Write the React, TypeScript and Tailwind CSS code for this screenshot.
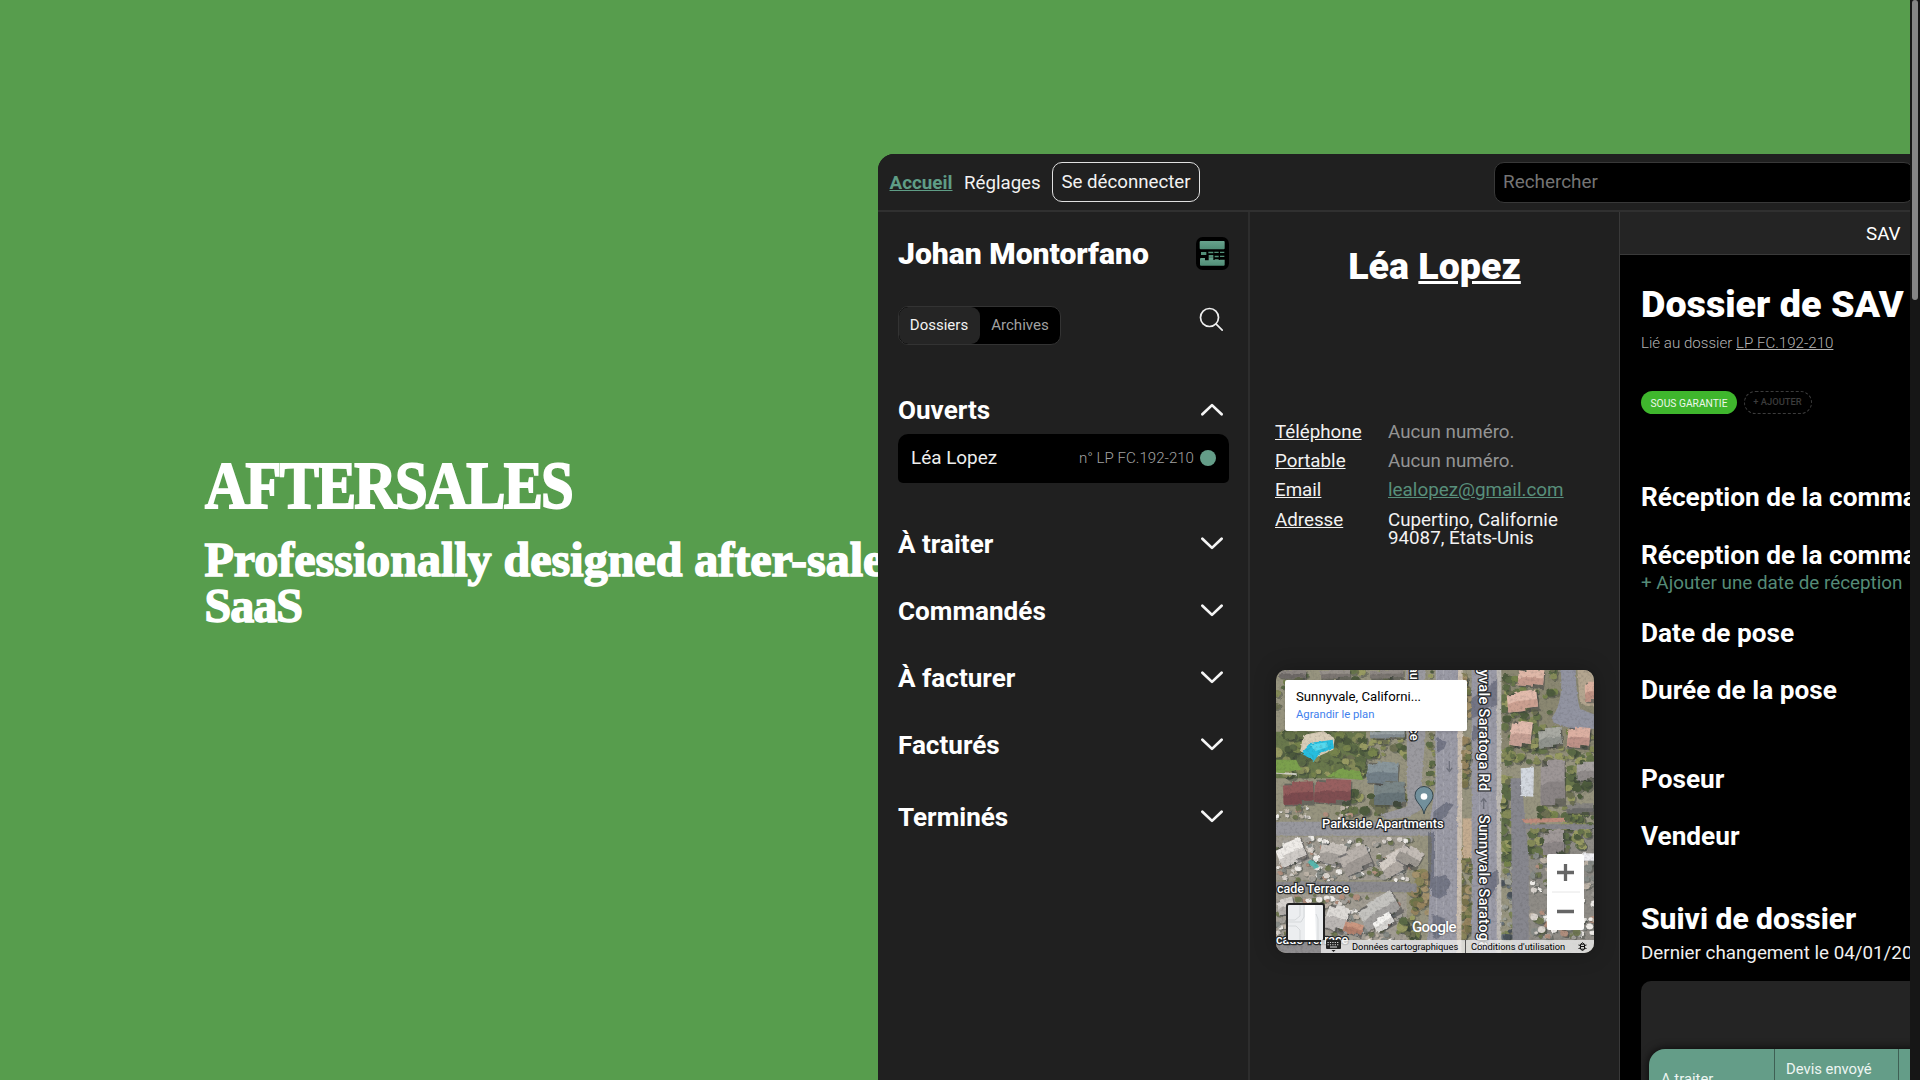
import type { ReactNode } from "react";

function Chevron({ up = false }: { up?: boolean }) {
  return (
    <svg width="22" height="14" viewBox="0 0 22 14" fill="none" stroke="#f5f5f5" strokeWidth="2.7" strokeLinecap="round" strokeLinejoin="round" className={up ? "-translate-y-px rotate-180" : ""}>
      <path d="M1.4 1.7 11 10.900l9.600-9.200" />
    </svg>
  );
}

function Section({ title, up }: { title: string; up?: boolean }) {
  return (
    <div className="flex h-10 items-center justify-between pr-1.5 text-[26.1px] font-bold leading-10 text-white">
      <span>{title}</span>
      <Chevron up={up} />
    </div>
  );
}

function Logo() {
  return (
    <svg width="33" height="33" viewBox="0 0 99 99">
      <defs>
        <linearGradient id="lg" x1="0" y1="0" x2="0" y2="1">
          <stop offset="0" stopColor="#68a38d" />
          <stop offset="1" stopColor="#508d76" />
        </linearGradient>
      </defs>
      <rect width="99" height="99" rx="20" fill="#000" />
      <rect x="11" y="12" width="75" height="25" rx="3" fill="url(#lg)" />
      <path d="M15 45h16v9H15z M37 44h15v5H37z M55 44h13v4H55z M72 44h13v4H72z M38 54h14v7H38z M56 56h12v5H56z M72 56h13v4H72z" fill="#528f78" />
      <path d="M12 66q0-3 3-3h12v7h11v-9h14v8h4v-2h12v2h4v-1h14v15q0 3-3 3H15q-3 0-3-3z" fill="url(#lg)" />
    </svg>
  );
}

function rng(seed: number) {
  let s = seed;
  return () => {
    s = (s * 16807) % 2147483647;
    return s / 2147483647;
  };
}

const GREENS = ["#66744a", "#76834c", "#4d5b3d", "#848a58", "#5b6a46", "#979a62", "#6d7053"];
const BROWNS = ["#95835e", "#78724c", "#a4926d", "#6e7549", "#8a855a"];
const CLUTTER = ["#d9d3cd", "#a3a09a", "#bdb3a7", "#868a86", "#6f7752", "#efece8", "#b08e7d"];

type Patch = [number, number, number, number, number, number, string[]];
const PATCHES: Patch[] = [
  [18, 15, 390, 200, 60, 12, GREENS],
  [18, 200, 270, 130, 80, 15, GREENS],
  [280, 195, 130, 90, 30, 13, GREENS],
  [220, 375, 190, 75, 28, 14, GREENS],
  [18, 425, 230, 35, 26, 8, CLUTTER],
  [475, 15, 22, 340, 30, 9, GREENS],
  [572, 15, 26, 345, 50, 13, BROWNS],
  [570, 560, 40, 270, 50, 13, BROWNS],
  [692, 250, 34, 350, 55, 14, GREENS],
  [700, 15, 160, 190, 54, 12, GREENS],
  [715, 190, 255, 100, 70, 12, GREENS],
  [885, 280, 85, 270, 70, 14, GREENS],
  [780, 420, 110, 150, 30, 14, GREENS],
  [785, 570, 190, 250, 110, 11, CLUTTER],
  [695, 610, 34, 220, 30, 10, ["#4a525a", "#667077", "#7d8658", "#9c9e95"]],
  [20, 520, 400, 125, 150, 9, CLUTTER],
  [20, 690, 370, 140, 130, 9, CLUTTER],
  [425, 600, 50, 150, 30, 14, BROWNS],
  [385, 755, 60, 70, 20, 14, GREENS],
];

function Trees() {
  const out: ReactNode[] = [];
  PATCHES.forEach(([x, y, w, h, n, r, colors], p) => {
    const rand = rng(991 + p * 77);
    for (let i = 0; i < n; i++) {
      const cx = x + rand() * w;
      const cy = y + rand() * h;
      const rr = r * (0.5 + rand() * 0.7);
      const fill = colors[Math.floor(rand() * colors.length)];
      out.push(<ellipse key={`s${p}-${i}`} cx={cx + rr * 0.4} cy={cy + rr * 0.35} rx={rr} ry={rr * 0.9} fill="#353c38" opacity="0.4" />);
      out.push(<ellipse key={`t${p}-${i}`} cx={cx} cy={cy} rx={rr} ry={rr * 0.85} fill={fill} />);
    }
  });
  return <g>{out}</g>;
}

type House = [number, number, number, number, number, string, string];
const HOUSES: House[] = [
  [40, 350, 90, 68, -2, "#935b5b", "#7c4a4e"],
  [134, 342, 108, 72, 3, "#986060", "#7f4e51"],
  [292, 290, 92, 66, 4, "#89969b", "#727f87"],
  [312, 350, 92, 70, 0, "#7a8687", "#677478"],
  [300, 196, 104, 24, 0, "#9ca5a7", "#828b90"],
  [28, 14, 80, 26, 3, "#8b8581", "#6e6967"],
  [150, 14, 90, 26, 0, "#96908a", "#7b7571"],
  [300, 14, 100, 26, 0, "#8f8984", "#7a7570"],
  [745, 12, 76, 52, 5, "#dfb8a8", "#c59a8c"],
  [712, 78, 90, 60, -6, "#e2bbac", "#cba091"],
  [722, 168, 62, 76, 8, "#e1bbad", "#c6a094"],
  [806, 188, 68, 60, -4, "#a9aaa3", "#90938d"],
  [893, 186, 66, 62, 5, "#dcb0a2", "#be9288"],
  [945, 50, 30, 60, 0, "#dbb09f", "#be9284"],
  [812, 284, 72, 136, 0, "#9d9696", "#8a8484"],
  [920, 290, 55, 56, 0, "#a7a2a1", "#8f8a89"],
  [820, 494, 62, 76, 0, "#a09998", "#8b8585"],
  [890, 415, 80, 30, 0, "#858380", "#6b6b6a"],
  [22, 530, 82, 66, -22, "#efece8", "#cfcbc7"],
  [150, 535, 76, 62, 12, "#c6c0ba", "#a5a09b"],
  [212, 550, 88, 70, -24, "#b9b2ac", "#9f9994"],
  [330, 560, 96, 62, -28, "#d4cdc6", "#b0a9a3"],
  [385, 545, 70, 56, 30, "#c3bcb6", "#9d9892"],
  [268, 700, 118, 74, -30, "#c5c4c0", "#a2a09e"],
  [168, 720, 64, 76, 20, "#dedbd7", "#bbb7b4"],
  [310, 752, 60, 40, -30, "#f4f3f0", "#d8d6d3"],
  [222, 772, 56, 34, 18, "#cb9780", "#b07e6b"],
  [22, 700, 50, 46, -15, "#d6d2ce", "#b2aeaa"],
];

function Houses() {
  return (
    <g>
      {HOUSES.map(([x, y, w, h, a, c, d], i) => (
        <g key={i} transform={`rotate(${a} ${x + w / 2} ${y + h / 2})`}>
          <rect x={x + 4} y={y + 5} width={w} height={h} fill="#30343a" opacity="0.45" />
          <path d={`M${x} ${y + h * 0.15}h${w * 0.3}v${-h * 0.15}h${w * 0.7}v${h * 0.85}h${-w * 0.4}v${h * 0.15}h${-w * 0.6}z`} fill={c} />
          <path d={`M${x} ${y + h * 0.6}l${w * 0.3} ${-h * 0.12}h${w * 0.7}v${h * 0.37}h${-w * 0.4}v${h * 0.15}h${-w * 0.6}z`} fill={d} />
        </g>
      ))}
    </g>
  );
}

function SatelliteMap() {
  return (
    <svg width="318" height="283" viewBox="18 15 954 849" preserveAspectRatio="none">
      <defs>
        <filter id="grain" x="0" y="0" width="100%" height="100%">
          <feTurbulence type="fractalNoise" baseFrequency="0.12" numOctaves="3" seed="8" />
          <feColorMatrix values="0 0 0 0 0.05  0 0 0 0 0.05  0 0 0 0 0.05  2.4 0 0 0 -1.1" />
        </filter>
        <filter id="rough" x="-5%" y="-5%" width="110%" height="110%" colorInterpolationFilters="sRGB">
          <feTurbulence type="fractalNoise" baseFrequency="0.07" numOctaves="2" seed="3" result="n" />
          <feDisplacementMap in="SourceGraphic" in2="n" scale="8" xChannelSelector="R" yChannelSelector="G" />
        </filter>
      </defs>
      <rect x="18" y="15" width="954" height="849" fill="#97947f" />
      <g filter="url(#rough)">
        <path d="M18 200h270v140H18z" fill="#69784c" />
        <path d="M690 10h290v255H690z" fill="#8a8771" />
        <path d="M740 480h240v390H740z" fill="#8f8c86" />
        <path d="M10 515h400v130H10zM10 685h400v140H10z" fill="#a19c92" />
        <Trees />
        <path d="M18 284h60l16 30-80 10zM170 335l40-24 60 8 10 26z" fill="#7ba04d" />
        <path d="M10 322l70 6" stroke="#d0d0c4" strokeWidth="6" />
        <path d="M100 210l60-12 34 22-4 34-50 22-50-16z" fill="#d9ceb9" />
        <path d="M92 264l28-30 68-10 4 26-42 14-18 24z" fill="#27bedf" />
        <path d="M120 240l50-8 4 14-38 12z" fill="#55d9ee" />
        <path d="M112 590l22-4 14 20-16 6z" fill="#58b6ad" />
        <path d="M408 10h58v205l-10 120v100l-46 22-60 6-20-14 82-24z" fill="#9b9a9f" />
        <path d="M10 470h340l130 6v36H10z" fill="#98989e" />
        <path d="M10 650h390l40 8v24H10z" fill="#8b8a8e" />
        <path d="M10 826h450v44H10z" fill="#8f8d8f" />
        <path d="M497 5h70v868h-97l16-338-8-60 18-110z" fill="#9a9aa5" />
        <path d="M564 10h14l-4 860h-14z" fill="#cbbfb1" />
        <path d="M578 460h30v120h-30z" fill="#c4ac90" />
        <path d="M605 5h78v868h-78z" fill="#9999a5" />
        <path d="M680 5h14v868h-14z" fill="#bdb9b4" />
        <path d="M722 340h32l22 240v290h-48z" fill="#87878e" />
        <path d="M845 160q38-50 26-150h46q2 95 14 123l50 18v40l-70 2-60-20z" fill="#9294a1" />
        <path d="M922 10h54v110q-40 12-48-20z" fill="#b3a58f" />
        <path d="M755 462l130-4v12l-120 4z" fill="#bf8c7c" />
        <path d="M750 478h230v14H760z" fill="#86858a" />
        <path d="M752 310l40-3-2 88-36-2z" fill="#d3d8df" />
        <path d="M940 565h40v22h-40z" fill="#eeeef2" />
        <Houses />
      </g>
      <g stroke="#c6c6ce" strokeWidth="1.5" opacity="0.7">
        <path d="M520 15v850M543 15v850" strokeDasharray="14 10" />
        <path d="M499 15v850M628 15v850M660 15v850" />
      </g>
      <g fill="#363c52" opacity="0.38" filter="url(#rough)">
        <path d="M605 100l30-20 25-18 22-22v80l-28 6-20 24-29 10z" />
        <path d="M486 640l40-10 16 25-14 34-20 12-22-8zM488 750l36 10 8 30-30 34-14-8zM500 215l30 16-8 20-22 12zM490 440l40-30 20 10-24 36-36 24z" />
        <path d="M640 640l44-26 4 40-40 60zM610 180l24 12-14 30-12 8zM474 500h18v170h-18z" />
      </g>
      <path d="M538 288v30m-8-9 8 10 8-10M641 432v-30m-8 9 8-10 8 10" fill="none" stroke="#6f717c" strokeWidth="4" />
      <rect x="18" y="15" width="954" height="849" filter="url(#grain)" opacity="0.18" />
    </svg>
  );
}

function MapLabel({ children, className }: { children: ReactNode; className: string }) {
  return (
    <span className={`absolute whitespace-nowrap font-medium text-white [paint-order:stroke_fill] [-webkit-text-stroke:2.5px_#26282a] ${className}`}>{children}</span>
  );
}

function MapCard() {
  return (
    <div className="relative ml-[26px] mt-[122px] h-[283px] w-[318px] overflow-hidden rounded-[10px] shadow-[0_0_22px_rgba(0,0,0,0.28)]">
      <SatelliteMap />
      <MapLabel className="bottom-[212px] left-[130px] text-[12.800px] leading-4 [writing-mode:vertical-rl]">Laurel Terrace</MapLabel>
      <MapLabel className="bottom-[161px] left-[199px] text-[14.500px] leading-4 tracking-[0.350px] [writing-mode:vertical-rl]">Sunnyvale Saratoga Rd</MapLabel>
      <MapLabel className="left-[199px] top-[145px] text-[14.500px] leading-4 tracking-[0.350px] [writing-mode:vertical-rl]">Sunnyvale Saratoga Rd</MapLabel>
      <MapLabel className="left-[46px] top-[146px] text-[12.9px] leading-4">Parkside Apartments</MapLabel>
      <MapLabel className="left-px top-[211px] text-[12.5px] leading-4">cade Terrace</MapLabel>
      <MapLabel className="left-0 top-[262px] text-[12.5px] leading-4">cade Terrace</MapLabel>
      <svg className="absolute left-[138px] top-[116px]" width="20" height="29" viewBox="0 0 20 29">
        <path d="M10 28C9 20 1 16 1 9.500a9 9 0 0 1 18 0C19 16 11 20 10 28z" fill="#72909c" stroke="#34464f" strokeWidth="1" />
        <circle cx="10" cy="10.500" r="3.300" fill="#fff" />
      </svg>
      <div className="absolute left-[9px] top-[10px] flex h-[51px] w-[182px] flex-col rounded-[2px] bg-white pl-[11px] pt-[8px] shadow">
        <span className="text-[13.200px] font-[450] leading-[18px] text-black">Sunnyvale, Californi...</span>
        <span className="text-[11.3px] leading-[17px] text-[#427fed]">Agrandir le plan</span>
      </div>
      <div className="absolute left-[9.500px] top-[233px] h-[39px] w-[39px] rounded-[3px] border-2 border-[#222] bg-[#eceef0]">
        <svg width="35" height="35" viewBox="0 0 35 35" fill="none">
          <path d="M17 0h10l1 35H17z" fill="#fff" />
          <path d="M12 0v11l-5 4H0M12 35V25l-4-4H0M16 0v12l-3 5H0M28 9l2 5v21" stroke="#d5d8da" />
        </svg>
      </div>
      <span className="absolute left-[136px] top-[247px] text-[15px] font-medium leading-5 -tracking-[0.600px] text-white [text-shadow:0_0_2px_#333]">Google</span>
      <div className="absolute left-[271px] top-[184px] h-[76px] w-[37px] rounded-[2px] bg-white">
        <svg width="37" height="76" viewBox="0 0 37 76" stroke="#666" strokeWidth="3.300">
          <path d="M10 18.500h17M18.500 10v17M10 57.500h17" />
          <path d="M5 38h28" stroke="#e6e6e6" strokeWidth="1" />
        </svg>
      </div>
      <div className="absolute bottom-0 right-0 flex h-[13px] w-[273px] items-center bg-[#f2f2f2]/75 text-[9.3px] leading-[13px] text-black">
        <svg className="ml-[5px]" width="15" height="12" viewBox="0 0 15 12">
          <rect y="0" width="15" height="9" rx="1" fill="#222" />
          <path d="M1.500 2.500h12M1.500 4.700h12" stroke="#ddd" strokeWidth="1.100" strokeDasharray="1.200 1.200" />
          <path d="M4 7h7" stroke="#ddd" />
          <path d="M5.500 10h4l-2 2z" fill="#222" />
        </svg>
        <span className="ml-[11px] w-[113px]">Données cartographiques</span>
        <span className="flex h-full items-center border-l border-[#555] pl-[5px]">Conditions d'utilisation</span>
        <svg className="ml-auto mr-[7px]" width="9" height="9" viewBox="0 0 9 9" fill="none" stroke="#111" strokeWidth="1">
          <path d="M2.500 2.200h4v5h-4zM3 4.500h3M3 2l1.500-1.300L6 2M.5 3l2 .5M.5 6.500l2-.5M8.500 3l-2 .5M8.500 6.500l-2-.5M3 7.500l1.500 1L6 7.500" />
        </svg>
      </div>
    </div>
  );
}

function TopNav() {
  return (
    <nav className="flex h-[58px] shrink-0 items-center border-b-2 border-[#303030] bg-[#202020] pl-[11.500px] text-[18.700px] font-[450] text-[#f2f2f2]">
      <a className="w-[74.500px] shrink-0 pt-0.5 text-[18.850px] font-bold text-[#5f9d86] underline">Accueil</a>
      <a className="w-[88px] shrink-0 pt-0.5">Réglages</a>
      <button className="h-10 w-[148px] shrink-0 whitespace-nowrap rounded-[10px] border border-[#e0e0e0] pt-px text-center">Se déconnecter</button>
      <div className="ml-[294px] flex h-[41px] w-[420px] shrink-0 items-center rounded-[10px] border border-[#383838] bg-black pl-2 pt-px text-[18.900px] font-normal text-[#747474]">Rechercher</div>
    </nav>
  );
}

function Sidebar() {
  return (
    <aside className="flex w-[372px] shrink-0 flex-col border-r-2 border-[#2d2d2d] pl-5 pr-[19px] pt-[25px]">
      <div className="flex h-[33px] items-center justify-between">
        <h1 className="whitespace-nowrap text-[30.100px] font-black leading-[33px]">Johan Montorfano</h1>
        <Logo />
      </div>
      <div className="mt-9 flex h-[39px] justify-between pr-[5px]">
        <div className="flex w-[163px] overflow-hidden rounded-[10px] border border-[#333] bg-black text-[15px]">
          <span className="flex w-[81px] items-center justify-center rounded-[9px] bg-[#252525] pr-px font-[450] text-[#f2f2f2]">Dossiers</span>
          <span className="flex flex-1 items-center justify-center text-[15.100px] text-[#a0a0a0]">Archives</span>
        </div>
        <svg className="mt-px" width="25" height="25" viewBox="0 0 25 25" fill="none" stroke="#eee" strokeWidth="1.700" strokeLinecap="round">
          <circle cx="10.500" cy="10.500" r="9" />
          <path d="m17.200 17.200 6 6" />
        </svg>
      </div>
      <div className="mt-[45px]">
        <Section title="Ouverts" up />
      </div>
      <div className="mt-1 flex h-[49px] items-center rounded-b-[5px] rounded-t-[10px] bg-black px-[13px]">
        <span className="flex-1 text-[18.900px] font-[450] text-[#eee]">Léa Lopez</span>
        <span className="text-[15.100px] font-light text-[#a2a2a2]">n° LP FC.192-210</span>
        <span className="ml-1.5 h-4 w-4 -translate-y-px rounded-full bg-[#649d88]" />
      </div>
      <div className="mt-[41px] flex flex-col gap-[27px]">
        <Section title="À traiter" />
        <Section title="Commandés" />
        <Section title="À facturer" />
        <Section title="Facturés" />
      </div>
      <div className="mt-[31.500px]">
        <Section title="Terminés" />
      </div>
    </aside>
  );
}

function InfoRow({ label, children }: { label: string; children: ReactNode }) {
  return (
    <div className="flex leading-[18.600px]">
      <span className="w-[113px] underline">{label}</span>
      {children}
    </div>
  );
}

function ClientColumn() {
  return (
    <section className="w-[370px] shrink-0 border-r border-[#393939]">
      <h2 className="mt-[34px] text-center text-[37.600px] font-black leading-10">
        Léa <span className="underline">Lopez</span>
      </h2>
      <div className="mt-[137px] flex flex-col gap-[10.600px] pl-[25px] text-[18.750px] font-[450] text-[#f2f2f2]">
        <InfoRow label="Téléphone">
          <span className="font-normal text-[#949494]">Aucun numéro.</span>
        </InfoRow>
        <InfoRow label="Portable">
          <span className="font-normal text-[#949494]">Aucun numéro.</span>
        </InfoRow>
        <InfoRow label="Email">
          <span className="text-[18.850px] font-normal text-[#588f7b] underline">lealopez@gmail.com</span>
        </InfoRow>
        <InfoRow label="Adresse">
          <span>
            Cupertino, Californie
            <br />
            94087, États-Unis
          </span>
        </InfoRow>
      </div>
      <MapCard />
    </section>
  );
}

function Heading({ children }: { children: ReactNode }) {
  return <h3 className="h-8 whitespace-nowrap text-[26.200px] font-bold leading-8">{children}</h3>;
}

function CaseColumn() {
  return (
    <section className="w-[600px] shrink-0 bg-black">
      <div className="flex h-[43px] items-center border-b border-[#3a3a3a] bg-[#242424] pl-[246px] pt-0.5 text-[18.800px] font-[450] leading-none">SAV</div>
      <div className="whitespace-nowrap pl-[21px] pt-[28.500px]">
        <h2 className="text-[37.700px] font-black leading-10">Dossier de SAV</h2>
        <p className="mt-[9px] text-[15.100px] font-light leading-5 text-[#b4b4b4]">
          Lié au dossier <span className="underline">LP FC.192-210</span>
        </p>
        <div className="mt-[38.500px] flex h-[22.500px] gap-[6.500px]">
          <span className="flex w-24 items-center justify-center rounded-full bg-[#3fb62d] pt-0.5 text-[10.250px] font-[450] text-[#ecf7ea]">SOUS GARANTIE</span>
          <span className="flex w-[68px] items-center justify-center rounded-full border border-dashed border-[#3c3c3c] text-[9.400px] font-medium text-[#3c3c3c]">+ AJOUTER</span>
        </div>
        <div className="mt-[67.500px]">
          <Heading>Réception de la commande</Heading>
        </div>
        <div className="mt-[25.500px]">
          <Heading>Réception de la commande</Heading>
          <p className="mt-0.5 text-[18.850px] leading-5 text-[#558b77]">+ Ajouter une date de réception</p>
        </div>
        <div className="mt-6 flex flex-col gap-[25px]">
          <Heading>Date de pose</Heading>
          <Heading>Durée de la pose</Heading>
        </div>
        <div className="mt-[57px] flex flex-col gap-[25px]">
          <Heading>Poseur</Heading>
          <Heading>Vendeur</Heading>
        </div>
        <h3 className="mt-[49px] text-[30px] font-extrabold leading-[36px]">Suivi de dossier</h3>
        <p className="mt-[6px] text-[18.800px] font-[450] leading-5 text-[#f0f0f0]">Dernier changement le 04/01/2023</p>
        <div className="mt-[18px] h-[200px] rounded-[10px] bg-[#242424] pl-2 pt-[68.500px]">
          <div className="flex h-[62px] rounded-2xl bg-[#649d88] text-[14.800px] text-[#eef5f2] shadow-[0_0_10px_rgba(0,0,0,0.8)]">
            <span className="w-[126px] border-r border-[#3f5f54] pl-[12px] pt-[20px] leading-5">A traiter</span>
            <span className="w-[124px] border-r border-[#3f5f54] pl-[11px] pt-[10px] leading-5">Devis envoyé</span>
          </div>
        </div>
      </div>
    </section>
  );
}

export default function App() {
  return (
    <div className="flex h-screen w-full overflow-hidden bg-[#579d4d] font-['Roboto',sans-serif] text-white">
      <div className="flex h-full min-w-0 flex-1 overflow-hidden">
        <header className="w-[878px] shrink-0 whitespace-nowrap pl-[204.500px] pt-[447px] font-['Liberation_Serif',serif] font-bold">
          <h1 className="h-[68px] origin-left scale-x-[0.87] text-[67.500px] leading-[78px] tracking-[-2.100px] [-webkit-text-stroke:2px_white]">AFTERSALES</h1>
          <p className="mt-[22px] text-[48px] leading-[46px] [-webkit-text-stroke:1.500px_white]">
            Professionally designed after-sales
            <br />
            <span className="tracking-[-1px]">SaaS</span>
          </p>
        </header>
        <main className="z-10 mt-[154px] flex flex-1 flex-col overflow-hidden rounded-tl-2xl bg-[#202020]">
          <TopNav />
          <div className="flex min-h-0 flex-1">
            <Sidebar />
            <ClientColumn />
            <CaseColumn />
          </div>
        </main>
      </div>
      <div className="h-full w-2.5 shrink-0 bg-[#161616] px-0.5">
        <div className="h-[300px] rounded-full bg-[#858585]" />
      </div>
    </div>
  );
}
